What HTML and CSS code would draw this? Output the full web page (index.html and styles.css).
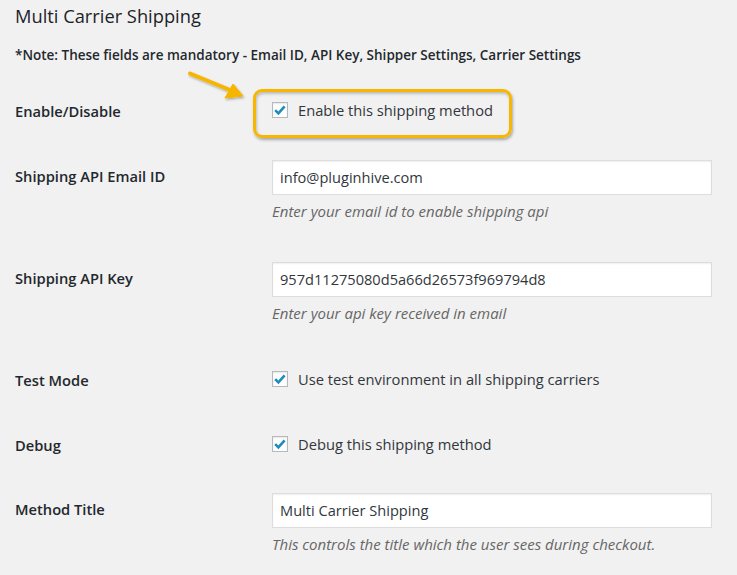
FILE: index.html
```html
<!DOCTYPE html>
<html lang="en">
<head>
<meta charset="utf-8">
<title>Multi Carrier Shipping</title>
<link rel="stylesheet" href="styles.css">
</head>
<body>
<div class="page">
  <h2 class="title">Multi Carrier Shipping</h2>
  <p class="note">*Note: These fields are mandatory - Email ID, API Key, Shipper Settings, Carrier Settings</p>

  <div class="form">
    <div class="row row-enable">
      <div class="th th-check">Enable/Disable</div>
      <div class="td">
        <label class="check-label">
          <span class="checkbox"><svg viewBox="0 0 16 16" width="16" height="16"><path d="M3.2 8.2 L6.4 11.4 L12.6 4.4" fill="none" stroke="#1e8cbe" stroke-width="2.6"/></svg></span>
          <span>Enable this shipping method</span>
          <span class="highlight-box"></span>
        </label>
      </div>
    </div>

    <div class="row row-email">
      <div class="th th-input">Shipping API Email ID</div>
      <div class="td">
        <div class="input">info@pluginhive.com</div>
        <p class="desc">Enter your email id to enable shipping api</p>
      </div>
    </div>

    <div class="row row-api">
      <div class="th th-input">Shipping API Key</div>
      <div class="td">
        <div class="input">957d11275080d5a66d26573f969794d8</div>
        <p class="desc">Enter your api key received in email</p>
      </div>
    </div>

    <div class="row row-test">
      <div class="th th-check">Test Mode</div>
      <div class="td">
        <label class="check-label">
          <span class="checkbox"><svg viewBox="0 0 16 16" width="16" height="16"><path d="M3.2 8.2 L6.4 11.4 L12.6 4.4" fill="none" stroke="#1e8cbe" stroke-width="2.6"/></svg></span>
          <span>Use test environment in all shipping carriers</span>
        </label>
      </div>
    </div>

    <div class="row row-debug">
      <div class="th th-check">Debug</div>
      <div class="td">
        <label class="check-label">
          <span class="checkbox"><svg viewBox="0 0 16 16" width="16" height="16"><path d="M3.2 8.2 L6.4 11.4 L12.6 4.4" fill="none" stroke="#1e8cbe" stroke-width="2.6"/></svg></span>
          <span>Debug this shipping method</span>
        </label>
      </div>
    </div>

    <div class="row row-method">
      <div class="th th-input">Method Title</div>
      <div class="td">
        <div class="input">Multi Carrier Shipping</div>
        <p class="desc">This controls the title which the user sees during checkout.</p>
      </div>
    </div>
  </div>

  <svg class="arrow" viewBox="0 0 70 45" width="70" height="45">
    <defs>
      <filter id="sh" x="-20%" y="-20%" width="140%" height="140%">
        <feDropShadow dx="1" dy="1.5" stdDeviation="1" flood-color="#000" flood-opacity="0.3"/>
      </filter>
    </defs>
    <g filter="url(#sh)" fill="#f6b602" stroke="#f6b602">
      <line x1="10" y1="13.5" x2="50" y2="30" stroke-width="4" stroke-linecap="round"/>
      <polygon points="53,24 45,38 63,36" stroke-width="1" stroke-linejoin="round"/>
    </g>
  </svg>
</div>
</body>
</html>
```
FILE: styles.css
```css
html, body {
  margin: 0;
  padding: 0;
  background: #f1f1f1;
}
body {
  font-family: "Open Sans", "Noto Sans", sans-serif;
  color: #23282d;
  font-size: 14px;
}
.page {
  position: relative;
  padding: 0 15px;
  width: 737px;
  height: 575px;
  box-sizing: border-box;
  overflow: hidden;
}
.title {
  margin: 0;
  padding-top: 4px;
  font-size: 18.3px;
  line-height: 24px;
  font-weight: 400;
  color: #1d2327;
}
.note {
  margin: 17px 0 0;
  font-size: 13.5px;
  line-height: 20px;
  font-weight: 600;
}
.form {
  margin-top: 33px;
}
.row {
  display: grid;
  grid-template-columns: 257px 440px;
  padding-bottom: 40px;
}
.row-enable { padding-bottom: 37px; }
.row-email { padding-bottom: 41px; }
.row-api { padding-bottom: 44px; }
.row-test { padding-bottom: 40px; }
.row-debug { padding-bottom: 36px; }
.th {
  font-weight: 600;
  font-size: 14.7px;
  line-height: 24px;
}
.th-input { padding-top: 4px; }
.th-check { padding-top: 1px; }
.td {
  min-width: 0;
}
.check-label {
  position: relative;
  display: flex;
  align-items: center;
  gap: 10px;
  line-height: 24px;
  font-size: 14.7px;
  color: #32373c;
}
.checkbox {
  width: 16px;
  height: 16px;
  box-sizing: border-box;
  border: 1px solid #b4b9be;
  background: #fff;
  box-shadow: inset 0 1px 2px rgba(0,0,0,0.1);
  display: flex;
  align-items: center;
  justify-content: center;
  flex: none;
}
.checkbox svg {
  display: block;
  margin: -1px;
}
.highlight-box {
  position: absolute;
  left: -19px;
  top: -9px;
  width: 259px;
  height: 49px;
  box-sizing: border-box;
  border: 3px solid #f6b602;
  border-radius: 9px;
  box-shadow: 1px 2px 3px rgba(0,0,0,0.3), inset 1px 2px 3px rgba(0,0,0,0.22);
}
.input {
  height: 35px;
  box-sizing: border-box;
  border: 1px solid #ddd;
  background: #fff;
  box-shadow: inset 0 1px 2px rgba(0,0,0,0.07);
  padding: 0 7px;
  font-size: 14.6px;
  line-height: 33px;
  color: #32373c;
}
.desc {
  margin: 6px 0 0;
  font-size: 15px;
  line-height: 20px;
  font-style: italic;
  color: #666;
}
.arrow {
  position: absolute;
  left: 180px;
  top: 60px;
}
```
